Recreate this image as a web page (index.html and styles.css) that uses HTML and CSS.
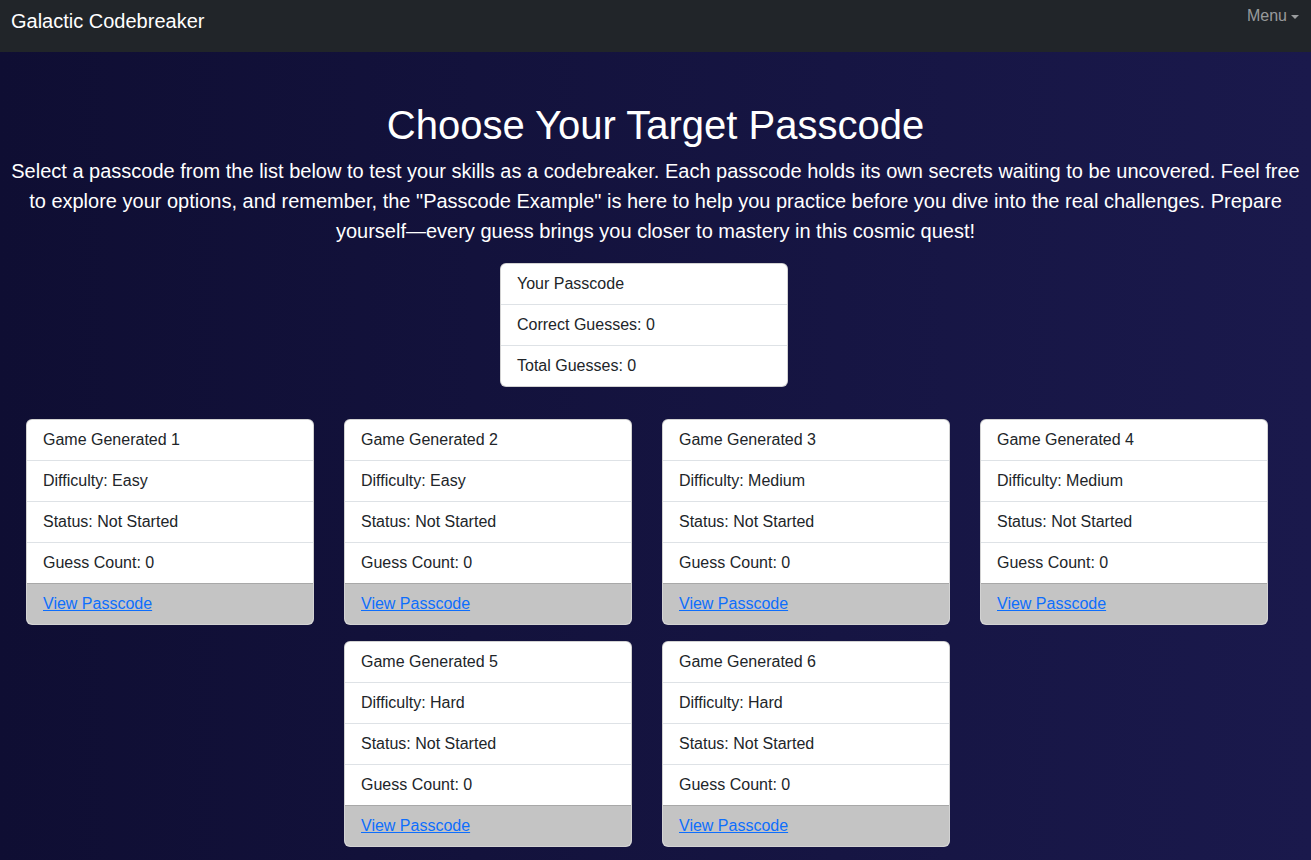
FILE: index.html
```html
<!DOCTYPE html>
<html lang="en">
<head>
<meta charset="utf-8">
<title>Galactic Codebreaker</title>
<link rel="stylesheet" href="styles.css">
</head>
<body>
<nav class="navbar">
  <span class="brand">Galactic Codebreaker</span>
  <span class="menu">Menu<span class="caret"></span></span>
</nav>
<main class="page">
  <h1 class="title">Choose Your Target Passcode</h1>
  <p class="intro">Select a passcode from the list below to test your skills as a codebreaker. Each passcode holds its own secrets waiting to be uncovered. Feel free to explore your options, and remember, the "Passcode Example" is here to help you practice before you dive into the real challenges. Prepare yourself—every guess brings you closer to mastery in this cosmic quest!</p>
  <ul class="card summary">
    <li class="item">Your Passcode</li>
    <li class="item">Correct Guesses: 0</li>
    <li class="item">Total Guesses: 0</li>
  </ul>
  <div class="grid">
    <div class="card game">
      <div class="item">Game Generated 1</div>
      <div class="item">Difficulty: Easy</div>
      <div class="item">Status: Not Started</div>
      <div class="item">Guess Count: 0</div>
      <div class="footer"><a href="#">View Passcode</a></div>
    </div>
    <div class="card game">
      <div class="item">Game Generated 2</div>
      <div class="item">Difficulty: Easy</div>
      <div class="item">Status: Not Started</div>
      <div class="item">Guess Count: 0</div>
      <div class="footer"><a href="#">View Passcode</a></div>
    </div>
    <div class="card game">
      <div class="item">Game Generated 3</div>
      <div class="item">Difficulty: Medium</div>
      <div class="item">Status: Not Started</div>
      <div class="item">Guess Count: 0</div>
      <div class="footer"><a href="#">View Passcode</a></div>
    </div>
    <div class="card game">
      <div class="item">Game Generated 4</div>
      <div class="item">Difficulty: Medium</div>
      <div class="item">Status: Not Started</div>
      <div class="item">Guess Count: 0</div>
      <div class="footer"><a href="#">View Passcode</a></div>
    </div>
    <div class="card game">
      <div class="item">Game Generated 5</div>
      <div class="item">Difficulty: Hard</div>
      <div class="item">Status: Not Started</div>
      <div class="item">Guess Count: 0</div>
      <div class="footer"><a href="#">View Passcode</a></div>
    </div>
    <div class="card game">
      <div class="item">Game Generated 6</div>
      <div class="item">Difficulty: Hard</div>
      <div class="item">Status: Not Started</div>
      <div class="item">Guess Count: 0</div>
      <div class="footer"><a href="#">View Passcode</a></div>
    </div>
  </div>
</main>
</body>
</html>
```

FILE: styles.css
```css
html, body {
  margin: 0;
  padding: 0;
}
body {
  font-family: "Liberation Sans", Arial, sans-serif;
  background: linear-gradient(to right, #0f0e33, #1a194c);
  min-height: 100vh;
  color: #212529;
}
.navbar {
  height: 52px;
  background: #212529;
  display: flex;
  justify-content: space-between;
  align-items: flex-start;
  padding: 0 12px 0 11px;
}
.brand {
  color: #fff;
  font-size: 20px;
  line-height: 30px;
  padding-top: 6px;
}
.menu {
  color: rgba(255, 255, 255, 0.55);
  font-size: 16px;
  line-height: 24px;
  padding-top: 4px;
  display: flex;
  align-items: center;
}
.caret {
  display: inline-block;
  margin-left: 4px;
  width: 0;
  height: 0;
  border-left: 4px solid transparent;
  border-right: 4px solid transparent;
  border-top: 4px solid rgba(255, 255, 255, 0.55);
  margin-top: 1px;
}
.page {
  padding: 49px 0 20px;
}
.title {
  margin: 0;
  color: #fff;
  font-weight: 400;
  font-size: 40px;
  line-height: 48px;
  text-align: center;
}
.intro {
  margin: 7px 0 17px;
  padding: 0 10px;
  color: #fff;
  font-size: 20px;
  line-height: 30px;
  text-align: center;
}
.card {
  background: #fff;
  border: 1px solid rgba(0, 0, 0, 0.175);
  border-radius: 6px;
  overflow: hidden;
  list-style: none;
  padding: 0;
  margin: 0;
  box-sizing: border-box;
}
.summary {
  width: 288px;
  margin-left: calc(50% - 155.5px);
}
.item {
  padding: 8px 16px;
  font-size: 16px;
  line-height: 24px;
  border-bottom: 1px solid #dee2e6;
}
.item:last-child {
  border-bottom: none;
}
.grid {
  width: 1242px;
  margin: 32px 0 0 26px;
  display: flex;
  flex-wrap: wrap;
  justify-content: center;
  gap: 16px 30px;
}
.game {
  width: 288px;
}
.game .item:nth-child(4) {
  border-bottom: 1px solid #a8a8a8;
}
.footer {
  background: #c4c4c4;
  padding: 8px 16px;
  font-size: 16px;
  line-height: 24px;
}
.footer a {
  color: #0d6efd;
  text-decoration: underline;
}
```
